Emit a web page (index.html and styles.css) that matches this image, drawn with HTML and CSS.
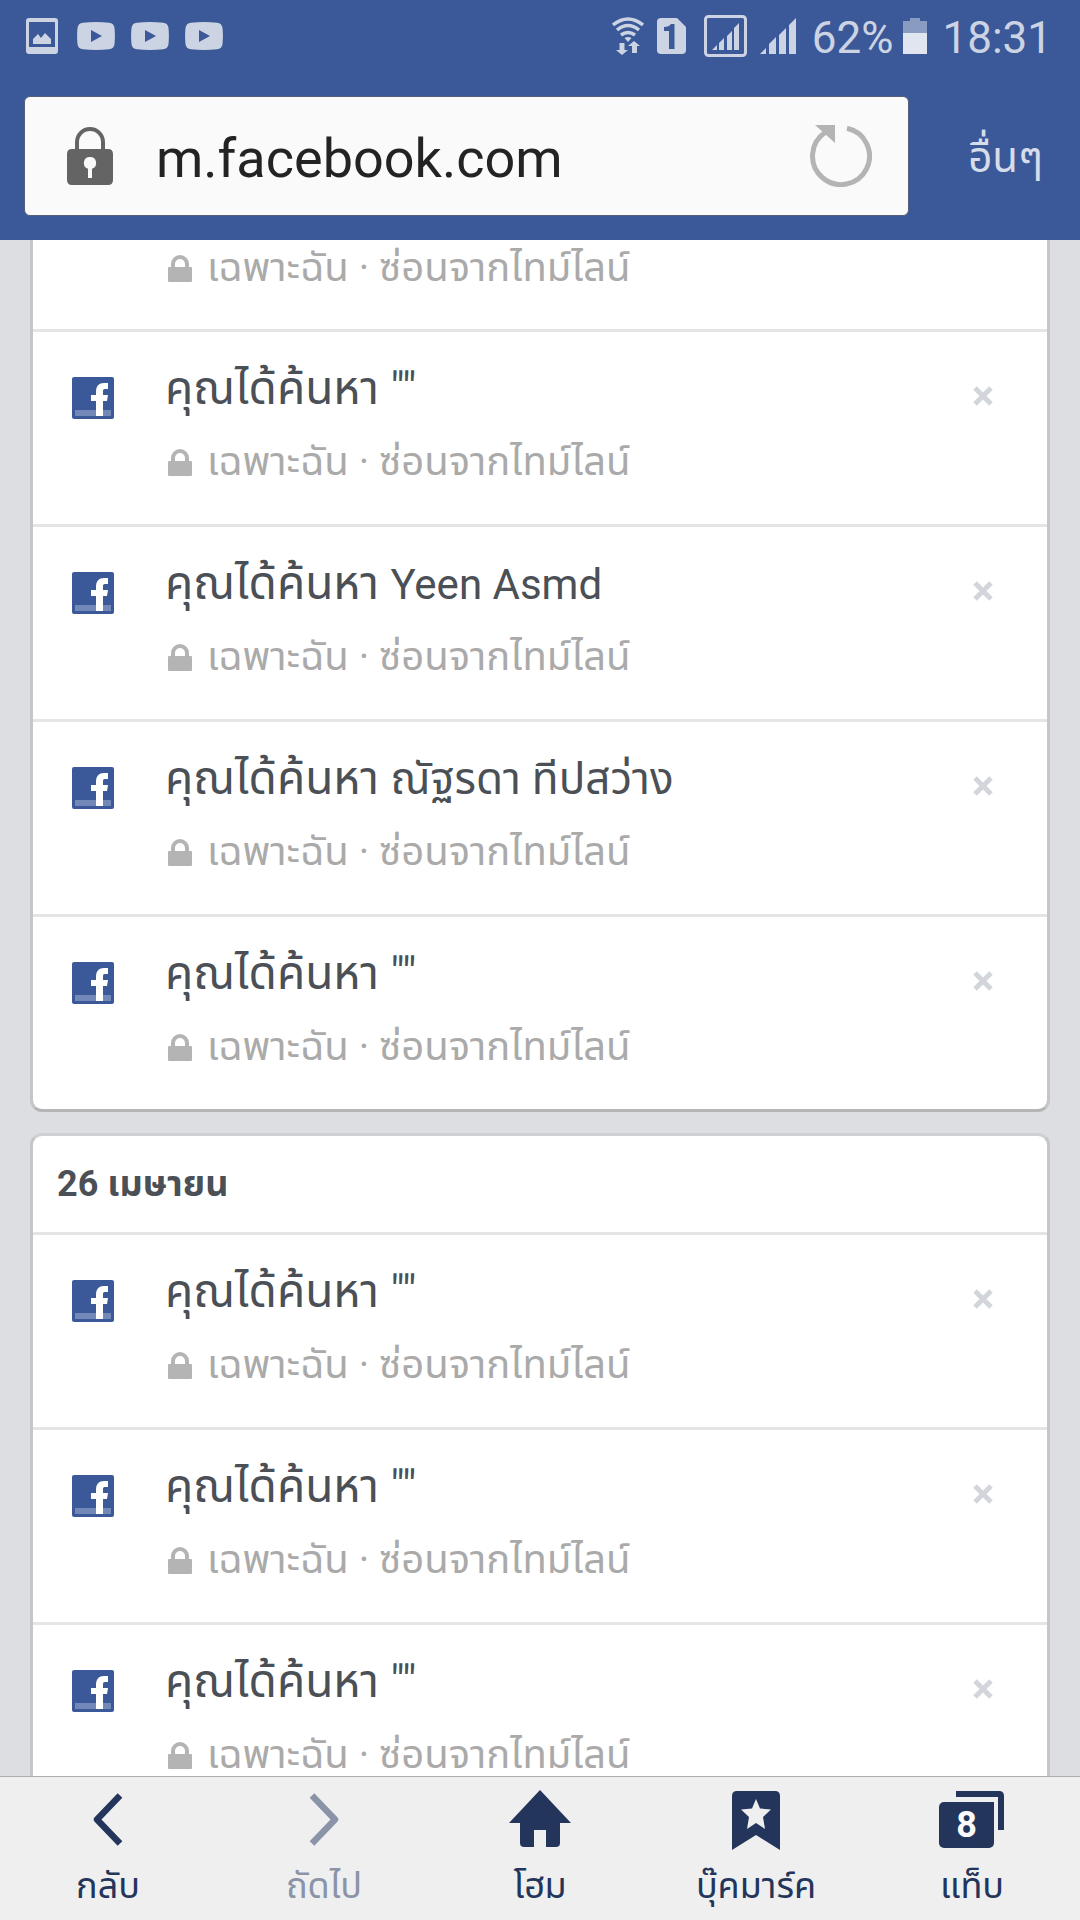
FILE: index.html
```html
<!DOCTYPE html>
<html lang="th">
<head>
<meta charset="utf-8">
<meta name="viewport" content="width=device-width, initial-scale=1">
<title>m.facebook.com</title>
<link rel="stylesheet" href="styles.css">
</head>
<body>
<svg class="sprite" aria-hidden="true">
  <symbol id="fb" viewBox="0 0 42 42">
    <rect width="42" height="42" rx="2" fill="#3b5998"/>
    <rect x="3" y="33" width="36" height="6" fill="#7288b8"/>
    <path d="M24 39V24h-5v-6h5v-3c0-6 3-9 8-9h4v6h-3c-2 0-2 1-2 3v3h5l-1 6h-4v15z" fill="#fff"/>
  </symbol>
  <symbol id="lock" viewBox="0 0 24 27">
    <path d="M5 14V9a7 7 0 0 1 14 0v5" fill="none" stroke="#b4b4b4" stroke-width="4"/>
    <rect y="12" width="24" height="15" rx="1" fill="#b4b4b4"/>
  </symbol>
  <symbol id="cross" viewBox="0 0 20 20">
    <path d="M2 2l16 16M18 2L2 18" stroke="#d2d6db" stroke-width="5"/>
  </symbol>
  <symbol id="video" viewBox="0 0 38 28">
    <path fill-rule="evenodd" d="M6 .7Q19-.5 32 .7q5 .4 5.500 5.300.8 8 0 16-.5 4.900-5.500 5.300-13 1.200-26 0-5-.4-5.500-5.300-.8-8 0-16Q1 1.100 6 .7zM14 8v12l11-6z"/>
  </symbol>
</svg>

<header class="top">
  <div class="status">
    <div class="status-left">
      <svg class="gallery" width="32" height="36" viewBox="0 0 32 36"><path fill-rule="evenodd" d="M3 0h26q3 0 3 3v30q0 3-3 3H3q-3 0-3-3V3q0-3 3-3zM3 4v25h26V4z"/><path d="M7 26v-5l5-5 3 4 4-5 6 6v5z"/></svg>
      <svg width="38" height="28"><use href="#video"/></svg>
      <svg width="38" height="28"><use href="#video"/></svg>
      <svg width="38" height="28"><use href="#video"/></svg>
    </div>
    <div class="status-right">
      <svg class="wifi" width="32" height="38" viewBox="0 0 32 38"><g fill="none" stroke="#ccd4e4" stroke-width="3.500"><path d="M1 8q15-12 30 0M5 13q11-9 22 0M9 18q7-5 14 0"/></g><path d="M12.500 21q3.500-2 7 0L16 25zM7.500 26h5v7H16l-6 5-6-5h3.500zM25 36h-5v-7h-4l6-5 6 5h-3z"/></svg>
      <svg class="sim" width="29" height="36" viewBox="0 0 29 36"><path d="M4 0h16l9 9v23q0 4-4 4H4q-4 0-4-4V4q0-4 4-4z"/><path d="M17.500 6v25H12V13H7V9q5 0 7-3z" fill="#3b5998"/></svg>
      <svg class="boxed" width="43" height="42" viewBox="0 0 43 42"><rect x="1.500" y="1.500" width="40" height="39" rx="3" fill="none" stroke="#ccd4e4" stroke-width="3"/><path d="M8 35l5-5v5zM15 28l5-5v12h-5zM23 21l5-5v19h-5zM30 13l5-5v27h-5z"/></svg>
      <svg class="signal" width="36" height="36" viewBox="0 0 36 36"><path d="M0 36l6-6v6zM9 26l7-7v17H9zM19 17l7-7v26h-7zM29 7l7-7v36h-7z"/></svg>
      <span class="percent">62%</span>
      <svg class="battery" width="24" height="36" viewBox="0 0 24 36"><path d="M0 3h7V0h10v3h7v13H0z" fill="#8a9bc1"/><path d="M0 15h24v21H0z" fill="#e1e5ef"/></svg>
      <span class="clock">18:31</span>
    </div>
  </div>
  <div class="browser">
    <div class="address">
      <svg width="46" height="58" viewBox="0 0 46 58"><path d="M10 24V15a13 13 0 0 1 26 0v9" fill="none" stroke="#646464" stroke-width="4"/><path fill-rule="evenodd" fill="#646464" d="M5 22h36q5 0 5 5v26q0 5-5 5H5q-5 0-5-5V27q0-5 5-5zM23 30a6 6 0 0 0-2 11.700V51h4v-9.300A6 6 0 0 0 23 30z"/></svg>
      <input class="url" type="text" value="m.facebook.com" aria-label="URL">
      <button class="icon-button" type="button" aria-label="โหลดใหม่">
        <svg width="62" height="62" viewBox="0 0 62 62"><path d="M37 3.200A28.500 28.500 0 1 1 15 7.500" fill="none" stroke="#b4b4b4" stroke-width="5"/><path d="M5 0h20v18z" fill="#b4b4b4"/></svg>
      </button>
    </div>
    <button class="more" type="button">อื่นๆ</button>
  </div>
</header>

<main class="feed">
  <section class="card card-continued">
    <ul class="rows">
      <li class="row row-cut"><div class="privacy"><svg width="24" height="27"><use href="#lock"/></svg><span>เฉพาะฉัน · ซ่อนจากไทม์ไลน์</span></div></li>
      <li class="row"><svg class="source" width="42" height="42"><use href="#fb"/></svg><div class="text"><p class="title">คุณได้ค้นหา <span class="query">""</span></p><div class="privacy"><svg width="24" height="27"><use href="#lock"/></svg><span>เฉพาะฉัน · ซ่อนจากไทม์ไลน์</span></div></div><button class="icon-button remove" type="button" aria-label="ลบ"><svg width="20" height="20"><use href="#cross"/></svg></button></li>
      <li class="row"><svg class="source" width="42" height="42"><use href="#fb"/></svg><div class="text"><p class="title">คุณได้ค้นหา <span class="query" lang="en">Yeen Asmd</span></p><div class="privacy"><svg width="24" height="27"><use href="#lock"/></svg><span>เฉพาะฉัน · ซ่อนจากไทม์ไลน์</span></div></div><button class="icon-button remove" type="button" aria-label="ลบ"><svg width="20" height="20"><use href="#cross"/></svg></button></li>
      <li class="row"><svg class="source" width="42" height="42"><use href="#fb"/></svg><div class="text"><p class="title">คุณได้ค้นหา <span class="query">ณัฐรดา ทีปสว่าง</span></p><div class="privacy"><svg width="24" height="27"><use href="#lock"/></svg><span>เฉพาะฉัน · ซ่อนจากไทม์ไลน์</span></div></div><button class="icon-button remove" type="button" aria-label="ลบ"><svg width="20" height="20"><use href="#cross"/></svg></button></li>
      <li class="row"><svg class="source" width="42" height="42"><use href="#fb"/></svg><div class="text"><p class="title">คุณได้ค้นหา <span class="query">""</span></p><div class="privacy"><svg width="24" height="27"><use href="#lock"/></svg><span>เฉพาะฉัน · ซ่อนจากไทม์ไลน์</span></div></div><button class="icon-button remove" type="button" aria-label="ลบ"><svg width="20" height="20"><use href="#cross"/></svg></button></li>
    </ul>
  </section>
  <section class="card">
    <h2 class="date">26 เมษายน</h2>
    <ul class="rows">
      <li class="row"><svg class="source" width="42" height="42"><use href="#fb"/></svg><div class="text"><p class="title">คุณได้ค้นหา <span class="query">""</span></p><div class="privacy"><svg width="24" height="27"><use href="#lock"/></svg><span>เฉพาะฉัน · ซ่อนจากไทม์ไลน์</span></div></div><button class="icon-button remove" type="button" aria-label="ลบ"><svg width="20" height="20"><use href="#cross"/></svg></button></li>
      <li class="row"><svg class="source" width="42" height="42"><use href="#fb"/></svg><div class="text"><p class="title">คุณได้ค้นหา <span class="query">""</span></p><div class="privacy"><svg width="24" height="27"><use href="#lock"/></svg><span>เฉพาะฉัน · ซ่อนจากไทม์ไลน์</span></div></div><button class="icon-button remove" type="button" aria-label="ลบ"><svg width="20" height="20"><use href="#cross"/></svg></button></li>
      <li class="row"><svg class="source" width="42" height="42"><use href="#fb"/></svg><div class="text"><p class="title">คุณได้ค้นหา <span class="query">""</span></p><div class="privacy"><svg width="24" height="27"><use href="#lock"/></svg><span>เฉพาะฉัน · ซ่อนจากไทม์ไลน์</span></div></div><button class="icon-button remove" type="button" aria-label="ลบ"><svg width="20" height="20"><use href="#cross"/></svg></button></li>
    </ul>
  </section>
</main>

<nav class="toolbar">
  <button class="tool" type="button">
    <svg width="66" height="60" viewBox="0 0 66 60"><path d="M45 5.500L22 29.500l23 24" fill="none" stroke="currentColor" stroke-width="6.500" stroke-linejoin="round"/></svg>
    <span>กลับ</span>
  </button>
  <button class="tool" type="button" disabled>
    <svg width="66" height="60" viewBox="0 0 66 60"><path d="M21 5.500l23 24-23 24" fill="none" stroke="currentColor" stroke-width="6.500" stroke-linejoin="round"/></svg>
    <span>ถัดไป</span>
  </button>
  <button class="tool" type="button">
    <svg width="66" height="60" viewBox="0 0 66 60"><path fill="currentColor" d="M33 0l31 33H53v20q0 4-4 4H39V40H27v17H17q-4 0-4-4V33H2z"/></svg>
    <span>โฮม</span>
  </button>
  <button class="tool" type="button">
    <svg width="66" height="60" viewBox="0 0 66 60"><path fill="currentColor" d="M9 60V6q0-5 5-5h38q5 0 5 5v54L33 45z"/><path fill="#efefef" d="M33 9l4 9.500 11 1-8 7.500 2 12-9-6-9 6 2-12-8-7.500 11-1z"/></svg>
    <span>บุ๊คมาร์ค</span>
  </button>
  <button class="tool" type="button">
    <span class="tabs">
      <svg width="66" height="60" viewBox="0 0 66 60"><rect y="12" width="55" height="46" rx="5" fill="currentColor"/><path fill="currentColor" d="M49 12h6v6z"/><path fill="currentColor" d="M17 1h43q5 0 5 5v34h-6V7H17z"/></svg>
      <span class="count">8</span>
    </span>
    <span>แท็บ</span>
  </button>
</nav>
</body>
</html>
```
FILE: styles.css
```css
* { box-sizing: border-box; }

body {
  margin: 0;
  height: 100vh;
  display: flex;
  flex-direction: column;
  background: #dddee2;
  color: #4b4f56;
  font-family: Roboto, "Noto Sans Thai", "Noto Sans", sans-serif;
}

svg { display: block; flex: none; }
button, input { font: inherit; color: inherit; border: 0; padding: 0; background: none; }
.sprite { position: absolute; width: 0; height: 0; }
.icon-button { display: block; flex: none; }

/* Status bar and address bar */
.top { flex: none; background: #3b5998; padding-bottom: 24px; }

.status {
  display: flex;
  justify-content: space-between;
  align-items: center;
  height: 72px;
  padding: 0 28px 0 26px;
  color: #ccd4e4;
  fill: #ccd4e4;
  font-size: 44px;
  line-height: 52px;
}
.status-left, .status-right { display: flex; align-items: center; }
.status-left { gap: 16px; }
.gallery { margin-right: 3px; }
.sim { margin-left: 13px; }
.boxed { margin-left: 18px; }
.signal { margin-left: 13px; }
.percent { margin-left: 16px; padding-top: 3px; }
.battery { margin-left: 10px; }
.clock { margin-left: 15px; padding-top: 3px; }

.browser { display: flex; align-items: center; padding: 24px 37px 0 24px; }
.address {
  flex: 1;
  min-width: 0;
  display: flex;
  align-items: center;
  height: 120px;
  padding: 0 36px 0 42px;
  border: 1px solid #55607a;
  border-radius: 6px;
  background: #fafafa;
}
.url {
  flex: 1;
  min-width: 0;
  margin-left: 43px;
  padding-top: 6px;
  font-size: 54px;
  line-height: 64px;
  color: #232323;
}
.more { margin-left: 59px; padding-top: 3px; font-size: 42px; line-height: 60px; color: #d5dcea; }

/* Activity log */
.feed { flex: 1; min-height: 0; overflow-y: auto; scrollbar-width: none; padding: 0 30px; }

.card {
  margin-bottom: 21px;
  border: 3px solid #c5c6c8;
  border-top-color: #cfd0d3;
  border-bottom-color: #b4b5b7;
  border-radius: 12px;
  background: #fff;
}
.card-continued { border-top: 0; border-top-left-radius: 0; border-top-right-radius: 0; }

.date {
  margin: 0;
  padding: 24px;
  border-bottom: 3px solid #e5e5e5;
  font-size: 36px;
  line-height: 48px;
}

.rows { margin: 0; padding: 0; list-style: none; }
.row { display: flex; padding: 26px 54px 34px 39px; }
.row + .row { border-top: 3px solid #e5e5e5; }
.row-cut { padding: 0 54px 33px 132px; }
.source { margin-top: 19px; }
.text { flex: 1; min-width: 0; margin-left: 51px; }
.title { margin: 0 0 16px; font-size: 46px; line-height: 60px; }
.query { font-size: 44px; line-height: 44px; }
.query:lang(en) { font-size: 42px; }
.privacy {
  display: flex;
  align-items: center;
  gap: 15px;
  padding-left: 3px;
  font-size: 40px;
  line-height: 56px;
  color: #aaa;
}
.remove { align-self: flex-start; margin-top: 28px; }

/* Bottom toolbar */
.toolbar {
  flex: none;
  display: grid;
  grid-template-columns: repeat(5, 1fr);
  border-top: 1px solid #acacac;
  background: #efefef;
}
.tool {
  display: flex;
  flex-direction: column;
  align-items: center;
  gap: 12px;
  padding: 13px 0 10px;
  font-size: 36px;
  line-height: 48px;
  color: #23355b;
}
.tool:disabled { color: #8a93a8; }
.tabs { position: relative; }
.count {
  position: absolute;
  inset: 12px 11px 2px 0;
  text-align: center;
  font-size: 36px;
  font-weight: 700;
  line-height: 46px;
  color: #fafafa;
}
```
